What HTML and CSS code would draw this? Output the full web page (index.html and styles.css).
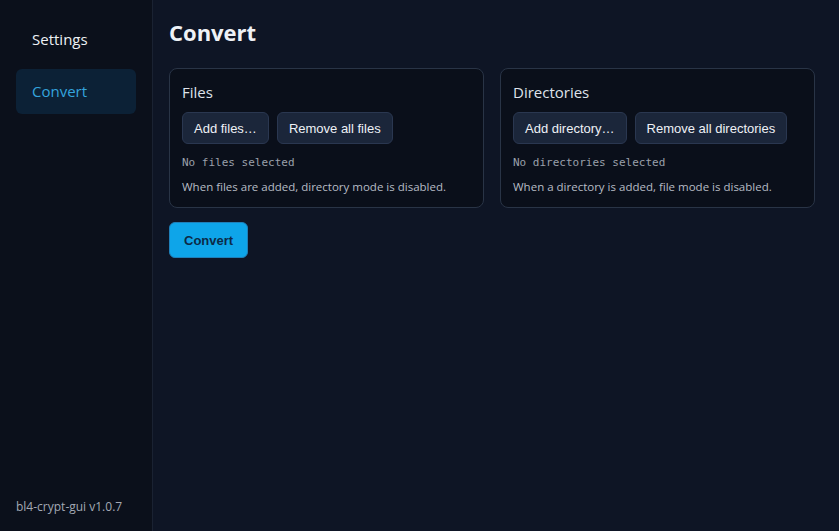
FILE: index.html
```html
<!DOCTYPE html>
<html lang="en">
    <head>
        <meta charset="UTF-8" />
        <meta name="viewport" content="width=device-width, initial-scale=1.0" />
        <title>bl4-crypt-gui</title>
        <link rel="stylesheet" href="styles.css">
    </head>
    <body>
        <div class="app">
            <aside class="sidebar">
                <nav class="nav">
                    <a class="nav-item">Settings</a>
                    <a class="nav-item active">Convert</a>
                </nav>
                <div class="version">bl4-crypt-gui v1.0.7</div>
            </aside>

            <main class="main">
                <h1>Convert</h1>

                <div class="panels">
                    <section class="panel">
                        <h2>Files</h2>
                        <div class="actions">
                            <button class="btn">Add files…</button>
                            <button class="btn">Remove all files</button>
                        </div>
                        <div class="selection">No files selected</div>
                        <p class="hint">When files are added, directory mode is disabled.</p>
                    </section>

                    <section class="panel">
                        <h2>Directories</h2>
                        <div class="actions">
                            <button class="btn">Add directory…</button>
                            <button class="btn">Remove all directories</button>
                        </div>
                        <div class="selection">No directories selected</div>
                        <p class="hint">When a directory is added, file mode is disabled.</p>
                    </section>
                </div>

                <button class="btn-primary">Convert</button>
            </main>
        </div>
    </body>
</html>
```

FILE: styles.css
```css
body {
    font-family: "Open Sans", "Noto Sans", sans-serif;
    margin: 0;
    padding: 0;
    background-color: #0e1525;
    color: #e5e7eb;
}

.app {
    display: flex;
    height: 100vh;
}

.sidebar {
    width: 152px;
    background-color: #0b101b;
    border-right: 1px solid #1a2232;
    display: flex;
    flex-direction: column;
    justify-content: space-between;
}

.nav {
    display: flex;
    flex-direction: column;
    gap: 7px;
    padding: 17px 16px;
}

.nav-item {
    display: block;
    height: 45px;
    line-height: 45px;
    padding: 0 16px;
    border-radius: 6px;
    font-size: 15px;
    color: #eef0f4;
    cursor: pointer;
}

.nav-item.active {
    background-color: #0c2136;
    color: #34a4dd;
}

.version {
    padding: 0 16px 16px;
    font-size: 12px;
    color: #a3a9b4;
}

.main {
    flex: 1;
    padding: 16px 24px 16px 16px;
}

.main h1 {
    margin: 0 0 20px;
    font-size: 22px;
    font-weight: 700;
    color: #eef1f6;
    line-height: 32px;
}

.panels {
    display: grid;
    grid-template-columns: 1fr 1fr;
    gap: 16px;
    margin-bottom: 14px;
}

.panel {
    background-color: #0a0f1a;
    border: 1px solid #293446;
    border-radius: 8px;
    padding: 12px;
    height: 140px;
    box-sizing: border-box;
}

.panel h2 {
    margin: 0 0 9px;
    font-size: 15px;
    font-weight: 400;
    line-height: 22px;
    color: #dfe3ea;
}

.actions {
    display: flex;
    gap: 8px;
    margin-bottom: 12px;
}

.btn {
    height: 32px;
    padding: 0 11px;
    background-color: #1b263a;
    color: #eef1f6;
    border: 1px solid #2a3750;
    border-radius: 6px;
    font-family: "Liberation Sans", Arial, sans-serif;
    font-size: 13px;
    cursor: pointer;
}

.selection {
    font-family: "DejaVu Sans Mono", "Liberation Mono", monospace;
    font-size: 11px;
    color: #9aa0aa;
    line-height: 14px;
}

.hint {
    margin: 9px 0 0;
    font-size: 11.5px;
    color: #b7bcc5;
    line-height: 16px;
}

.btn-primary {
    height: 36px;
    padding: 0 14px;
    background-color: #0ea5e9;
    color: #0c2a47;
    border: 1px solid #1f7fb8;
    border-radius: 6px;
    font-family: "Liberation Sans", Arial, sans-serif;
    font-size: 13px;
    font-weight: 700;
    cursor: pointer;
}
```
